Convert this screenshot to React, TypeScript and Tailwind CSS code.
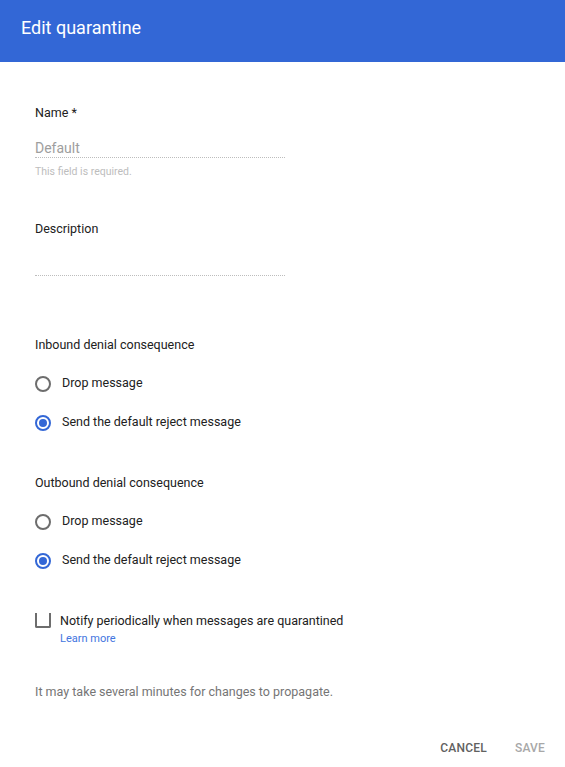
import React from 'react';

function Radio({ label, checked }: { label: string; checked?: boolean }) {
  return (
    <div className="flex items-center h-[39px]">
      <span
        className={`w-4 h-4 rounded-full border-2 flex items-center justify-center ${
          checked ? 'border-[#3367d6]' : 'border-[#6d6d6d]'
        }`}
      >
        {checked && <span className="w-2 h-2 rounded-full bg-[#3367d6]" />}
      </span>
      <span className="ml-[11px] text-[12.5px] text-[#212121]">{label}</span>
    </div>
  );
}

function RadioGroup({ title }: { title: string }) {
  return (
    <div>
      <div className="text-[12.5px] text-[#212121] leading-[20px]">{title}</div>
      <div className="mt-[9px]">
        <Radio label="Drop message" />
        <Radio label="Send the default reject message" checked />
      </div>
    </div>
  );
}

export default function App() {
  return (
    <div className="w-[565px] h-[767px] bg-white font-['Roboto',sans-serif] flex flex-col">
      <div className="h-[62px] bg-[#3367d6] flex items-center px-[21px] shrink-0">
        <h1 className="text-white text-[18px] leading-none -mt-[6px]">Edit quarantine</h1>
      </div>

      <div className="px-[35px] pt-[41px]">
        <div className="text-[12.5px] text-[#212121] leading-[20px]">Name *</div>
        <div className="w-[250px] mt-[16px]">
          <div className="text-[14px] text-[#9e9e9e] leading-[18px] border-b border-dotted border-[#bdbdbd]">
            Default
          </div>
          <div className="text-[10.5px] text-[#bdbdbd] mt-[8px] leading-[12px]">
            This field is required.
          </div>
        </div>

        <div className="text-[12.5px] text-[#212121] leading-[20px] mt-[41px]">Description</div>
        <div className="w-[250px] h-[37px] border-b border-dotted border-[#bdbdbd]" />

        <div className="mt-[59px]">
          <RadioGroup title="Inbound denial consequence" />
        </div>
        <div className="mt-[31px]">
          <RadioGroup title="Outbound denial consequence" />
        </div>

        <div className="mt-[31px] flex">
          <span className="w-4 h-[15px] border-2 border-t-0 border-[#6d6d6d] rounded-b-[2px] mt-[2px]" />
          <div className="ml-[9px]">
            <div className="text-[12.5px] text-[#212121] leading-[20px]">
              Notify periodically when messages are quarantined
            </div>
            <div className="text-[11px] text-[#4275e0] leading-[14px] mt-[1px]">Learn more</div>
          </div>
        </div>

        <div className="mt-[36px] text-[12.5px] text-[#757575] leading-[20px]">
          It may take several minutes for changes to propagate.
        </div>
      </div>

      <div className="flex justify-end items-center gap-[28px] pr-[20px] h-[20px] mt-[36px] shrink-0">
        <button className="text-[12px] font-medium text-[#616161] tracking-[0.2px]">CANCEL</button>
        <button className="text-[12px] font-medium text-[#a8a8a8] tracking-[0.2px]">SAVE</button>
      </div>
    </div>
  );
}
